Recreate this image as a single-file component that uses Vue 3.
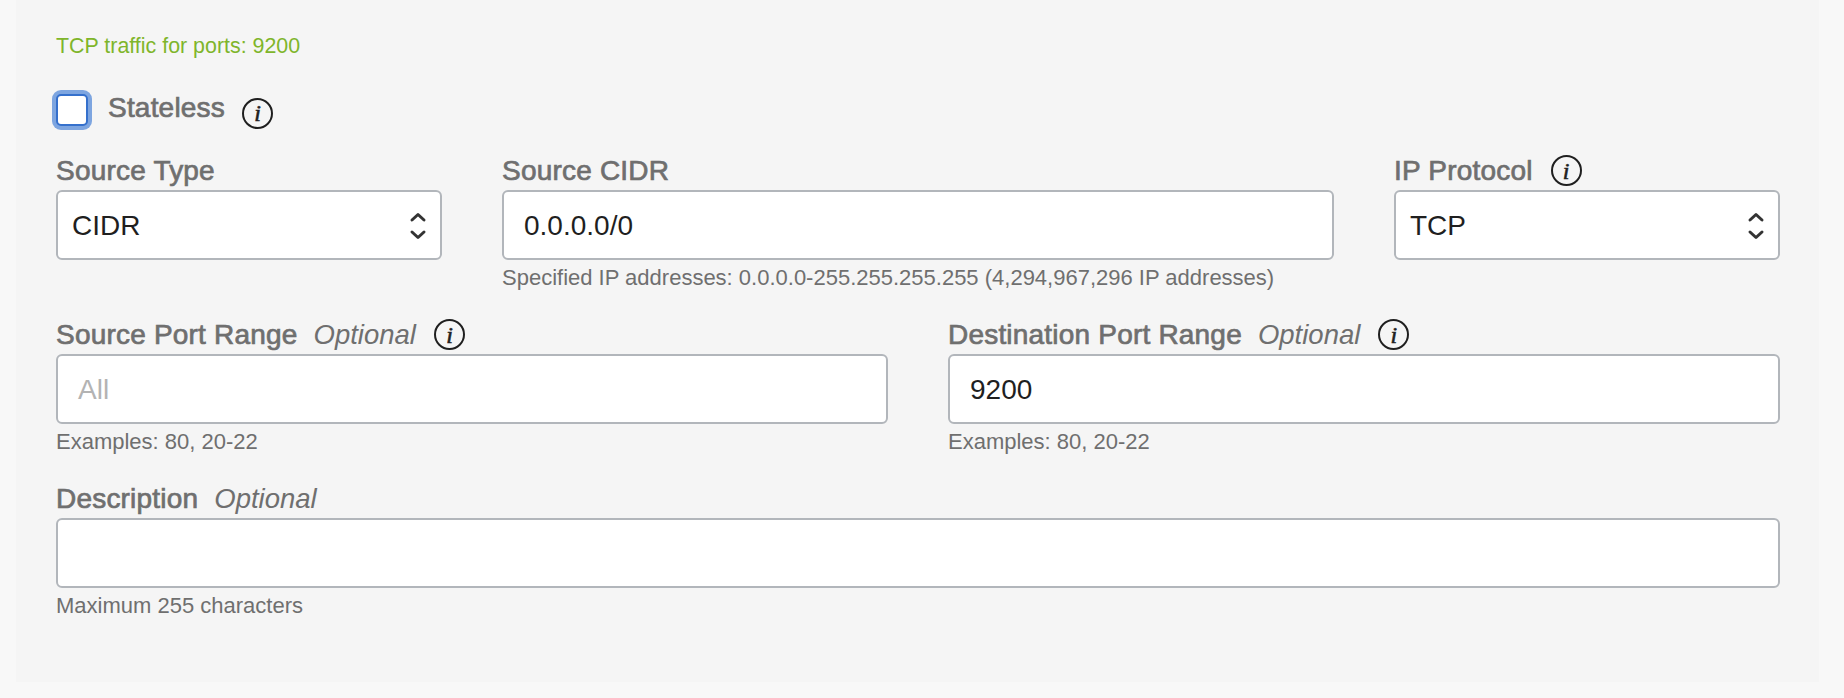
<script setup>
const rowOne = [
  { label: 'Source Type', span: 'span-3', value: 'CIDR', select: true },
  { label: 'Source CIDR', span: 'span-6', value: '0.0.0.0/0', help: 'Specified IP addresses: 0.0.0.0-255.255.255.255 (4,294,967,296 IP addresses)' },
  { label: 'IP Protocol', span: 'span-3', value: 'TCP', select: true, info: true }
]
const rowTwo = [
  { label: 'Source Port Range', optional: true, info: true, span: 'span-6', placeholder: 'All', help: 'Examples: 80, 20-22' },
  { label: 'Destination Port Range', optional: true, info: true, span: 'span-6', value: '9200', help: 'Examples: 80, 20-22' }
]
const rowThree = [
  { label: 'Description', optional: true, span: 'span-12', help: 'Maximum 255 characters' }
]
const rows = [rowOne, rowTwo, rowThree]
</script>

<template>
  <div class="page">
    <section class="panel">
      <p class="traffic">TCP traffic for ports: 9200</p>
      <div class="stateless">
        <span class="checkbox"></span>
        <span class="name stateless-label">Stateless</span>
        <span class="info"><i>i</i></span>
      </div>
      <div v-for="(row, r) in rows" :key="r" class="row">
        <div v-for="f in row" :key="f.label" class="field" :class="f.span">
          <div class="label">
            <span class="name">{{ f.label }}</span>
            <em v-if="f.optional" class="optional">Optional</em>
            <span v-if="f.info" class="info"><i>i</i></span>
          </div>
          <div class="control" :class="{ select: f.select }">
            <span v-if="f.value" class="value">{{ f.value }}</span>
            <span v-else-if="f.placeholder" class="placeholder">{{ f.placeholder }}</span>
            <svg v-if="f.select" class="chevrons" width="18" height="28" viewBox="0 0 18 28" fill="none" stroke="#333" stroke-width="3" stroke-linecap="round" stroke-linejoin="round">
              <path d="M3 8 9 2.5 15 8" />
              <path d="M3 20 9 25.5 15 20" />
            </svg>
          </div>
          <p v-if="f.help" class="help">{{ f.help }}</p>
        </div>
      </div>
    </section>
  </div>
</template>

<style>
html, body { margin: 0; background: #f8f8f8; }
</style>

<style scoped>
.page {
  box-sizing: border-box;
  width: 1844px;
  height: 698px;
  padding: 0 25px 16px 16px;
  background: #f8f8f8;
  font-family: "Liberation Sans", Arial, sans-serif;
}
.panel {
  box-sizing: border-box;
  height: 100%;
  padding: 32px 39px 0 40px;
  background: #f5f5f5;
}
.traffic {
  margin: 0;
  font-size: 21.4px;
  line-height: 28px;
  color: #7fb52b;
}
.stateless {
  display: flex;
  align-items: center;
  margin-top: 30px;
  height: 40px;
}
.checkbox {
  box-sizing: border-box;
  width: 32px;
  height: 32px;
  background: #fff;
  border: 2px solid #3570cc;
  border-radius: 5px;
  box-shadow: 0 0 0 4px #7da5e0;
}
.stateless-label {
  position: relative;
  top: -2px;
  margin-left: 20px;
}
.stateless .info { margin-left: 17px; position: relative; top: 3px; }
.row {
  display: grid;
  grid-template-columns: repeat(12, 1fr);
  column-gap: 60px;
}
.span-3 { grid-column: span 3; }
.span-6 { grid-column: span 6; }
.span-12 { grid-column: span 12; }
.field { min-width: 0; }
.label {
  box-sizing: border-box;
  display: flex;
  align-items: center;
  height: 40px;
  padding-top: 1px;
  color: #6f6f6f;
}
.name {
  font-size: 28px;
  letter-spacing: 0.2px;
  color: #6f6f6f;
  -webkit-text-stroke: 0.7px #6f6f6f;
}
.optional { margin-left: 16px; font-size: 27.5px; }
.label .info { margin-left: 18px; }
.info {
  box-sizing: border-box;
  display: inline-flex;
  align-items: center;
  justify-content: center;
  width: 31px;
  height: 31px;
  border: 2px solid #1f1f1f;
  border-radius: 50%;
  color: #1f1f1f;
}
.info i {
  font-family: "Liberation Serif", serif;
  font-size: 24px;
  line-height: 1;
  -webkit-text-stroke: 0.6px #1f1f1f;
}
.control {
  box-sizing: border-box;
  display: flex;
  align-items: center;
  justify-content: space-between;
  height: 70px;
  padding: 2px 20px 0;
  background: #fff;
  border: 2px solid #b2b6bb;
  border-radius: 6px;
  font-size: 28px;
  color: #1f1f1f;
}
.control.select { padding: 2px 13px 0 14px; }
.placeholder { color: #b3b3b3; }
.help {
  margin: 4px 0 0;
  font-size: 22px;
  line-height: 28px;
  color: #6f6f6f;
}
.stateless + .row { margin-top: 20px; }
.row + .row { margin-top: 22px; }
</style>
